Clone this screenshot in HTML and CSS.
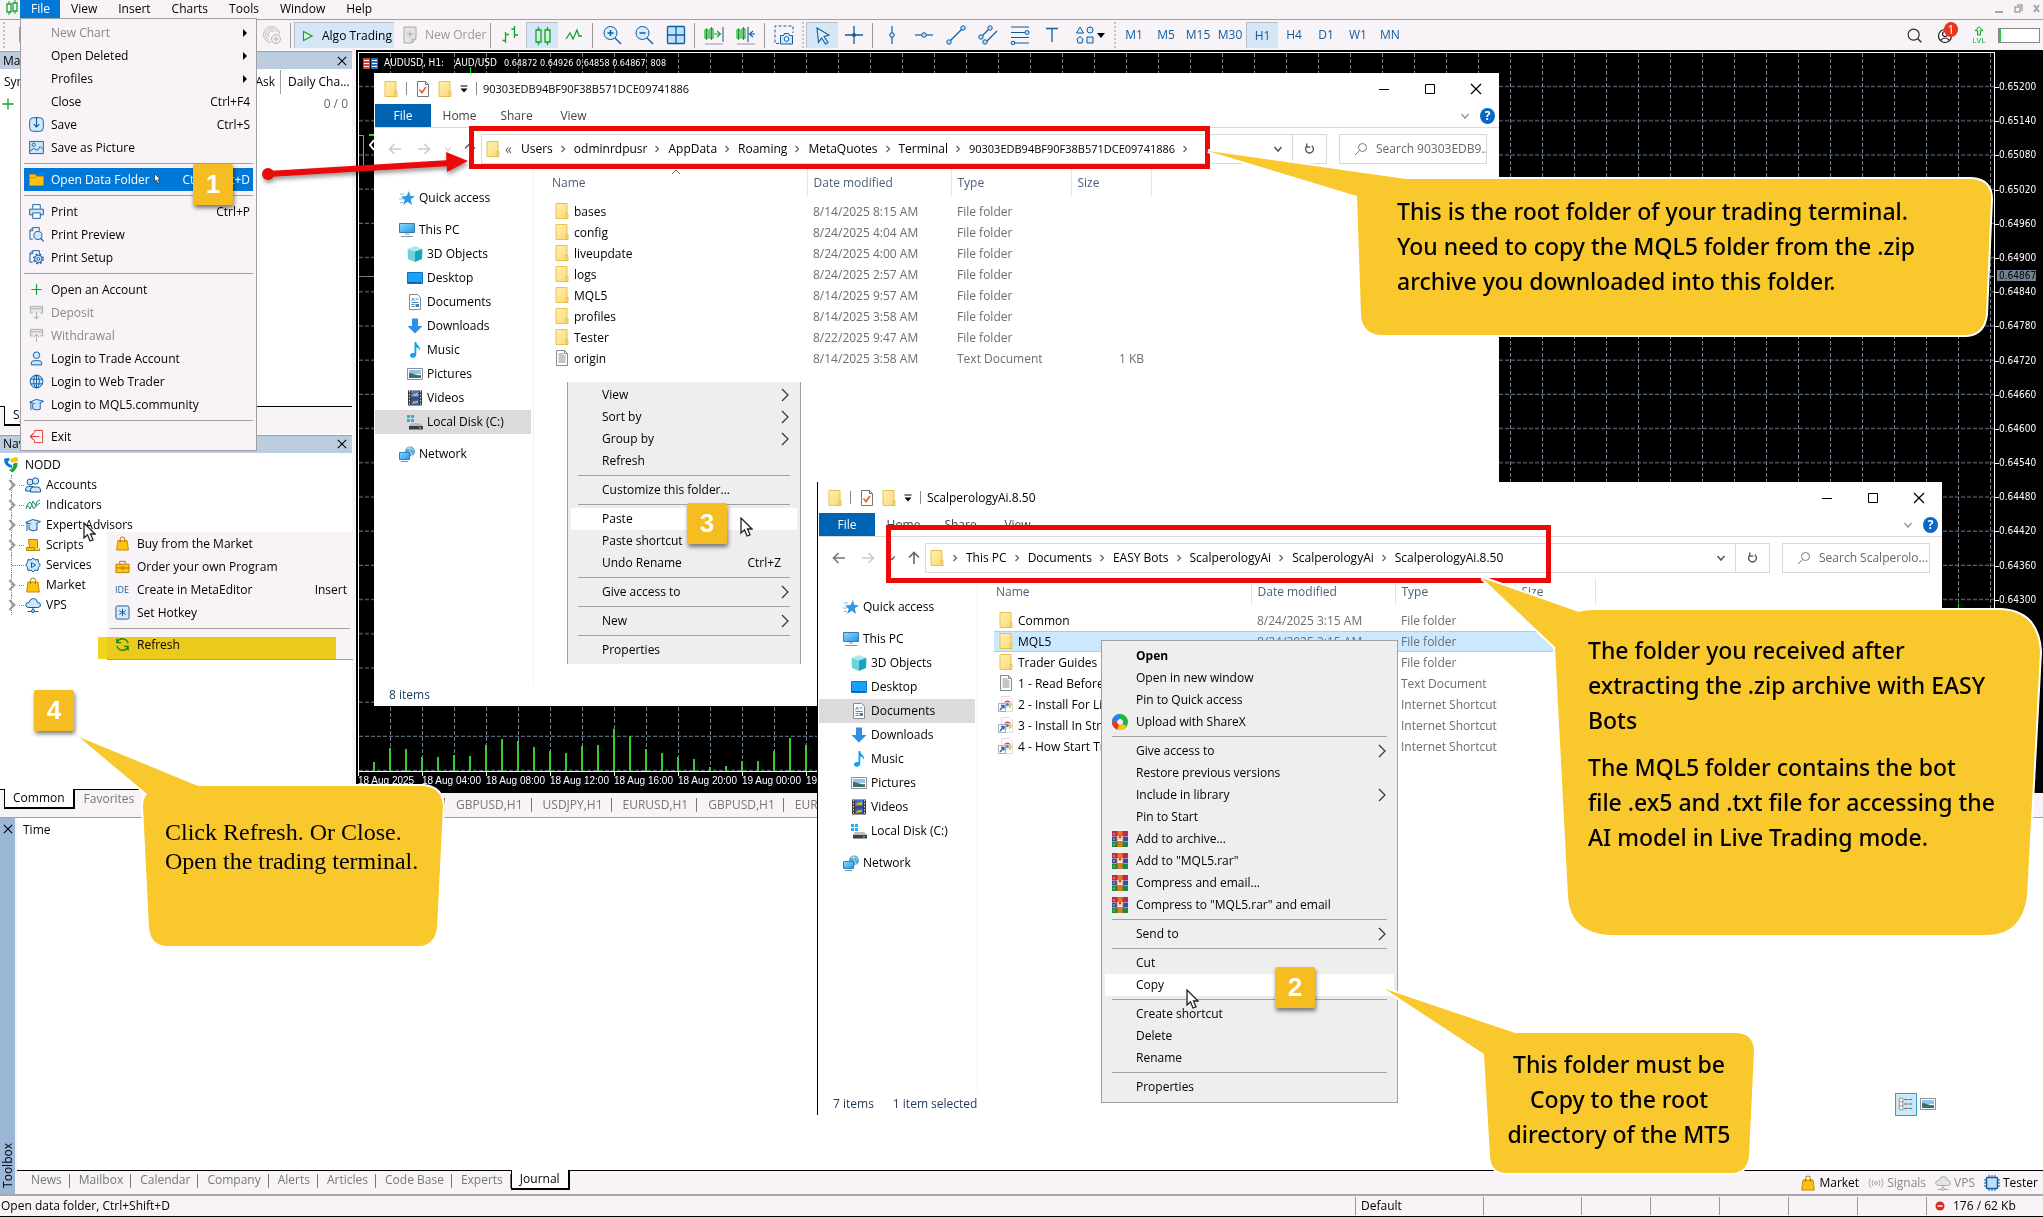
FILE: index.html
```html
<!DOCTYPE html>
<html lang="en">
<head>
<meta charset="utf-8">
<title>Trading terminal - install guide</title>
<link rel="stylesheet" href="styles.css">
</head>
<body>
<svg class="sprite" aria-hidden="true">
  <defs>
    <linearGradient id="g-folder" x1="0" y1="0" x2="1" y2="1"><stop offset="0" stop-color="#fff0ae"/><stop offset="1" stop-color="#fbd978"/></linearGradient>
    <linearGradient id="g-screen" x1="0" y1="0" x2="1" y2="1"><stop offset="0" stop-color="#8fd8ff"/><stop offset="1" stop-color="#1f97e8"/></linearGradient>
    <symbol id="folder" viewBox="0 0 16 16"><path d="M2 .5h11V13l.8 2.5H2z" fill="url(#g-folder)" stroke="#e8c24f"/><path d="M12 10.5h2v5h-2z" fill="#fbe08a" stroke="#e2b640" stroke-width=".8"/></symbol>
    <symbol id="doccheck" viewBox="0 0 16 16"><path d="M2.500.5h8l3 3v12h-11z" fill="#fff" stroke="#777"/><path d="M10.500.5v3h3" fill="none" stroke="#777"/><path d="m4.500 8.500 2.500 3 4-5.500" fill="none" stroke="#e8622a" stroke-width="1.700"/></symbol>
    <symbol id="textdoc" viewBox="0 0 16 16"><path d="M2.500.5h8l3 3v12h-11z" fill="#fff" stroke="#8a8a8a"/><path d="M10.500.5v3h3M4.500 4h5M4.500 6h7M4.500 8h7M4.500 10h7M4.500 12h7" fill="none" stroke="#8a8a8a"/></symbol>
    <symbol id="link" viewBox="0 0 16 16"><path d="M3.500.5h8l3 3v12h-11z" fill="#fff" stroke="#ddd"/><path d="M6 6.500a4 4 0 0 1 7 0z" fill="#e24a35"/><path d="M13 6.500a4 4 0 0 1-2 6V8z" fill="#f5bf2c"/><path d="M6 6.500 9.500 12a4 4 0 0 1-3.500-5.500" fill="#f5bf2c"/><circle cx="9.500" cy="8.500" r="1.900" fill="#3b79e0" stroke="#fff" stroke-width=".7"/><path d="M.5 7.500h7v8h-7z" fill="#fff" stroke="#aab"/><path d="m2 14 3.500-4M3 9.500h3v3" fill="none" stroke="#2a5fa8" stroke-width="1.400"/></symbol>
    <symbol id="star" viewBox="0 0 16 16"><path d="m10 1 1.200 4.800 4.800.7-4.200 2.800L13 15l-4.300-3.200L4 15l1.800-5L2 6.500l5.500-.6z" fill="#2f98e0"/><path d="M1 4h4M0 9h4M1 12.500h3" stroke="#7dbfec"/></symbol>
    <symbol id="pc" viewBox="0 0 16 16"><path d="M.5 1.500h15v9H.5z" fill="url(#g-screen)" stroke="#3d7ba6"/><path d="M6 12h4M2 14.500h12" stroke="#7d98aa" stroke-width="1.200"/></symbol>
    <symbol id="cube" viewBox="0 0 16 16"><path d="M8 0 15.500 3 8 5.500.5 3z" fill="#a9e8ee"/><path d="M.5 3 8 5.500V16L1 13z" fill="#6fd3de"/><path d="M15.500 3 8 5.500V16l7-3z" fill="#17a5bd"/></symbol>
    <symbol id="desktop" viewBox="0 0 16 16"><path d="M.5 2.500h15v11H.5z" fill="#18a0fb" stroke="#0d73c4"/><path d="M1 12.500h13" stroke="#095a9c" stroke-dasharray="9 1"/></symbol>
    <symbol id="docs" viewBox="0 0 16 16"><path d="M2.500.5h8l3 3v12h-11z" fill="#fff" stroke="#8a8a8a"/><path d="m4.500 7 1.500-3 1.500 3M8.500 5h3M4.500 8.500h7M4.500 10.500h3M4.500 12.500h3" fill="none" stroke="#4a90c8"/><path d="M8.500 10h3.500v3H8.500z" fill="#4a7fa8"/></symbol>
    <symbol id="down" viewBox="0 0 16 16"><path d="M5 .5h6v7.500h4.500L8 15.500.5 8H5z" fill="#2f8fe6"/></symbol>
    <symbol id="music" viewBox="0 0 16 16"><path d="M7.500 0h1.800c0 3.500 4.700 4 3.700 9-1-2.800-2.300-3.300-3.700-3.500V12c0 5-6.300 4.500-6.300 1.500 0-2 2.500-3 4.500-2.200z" fill="#12a0f4"/></symbol>
    <symbol id="pics" viewBox="0 0 16 16"><path d="M.5 2.500h15v11H.5z" fill="#fff" stroke="#8f8f8f"/><path d="M2 4h12v4H2z" fill="#8fc4f0"/><path d="M2 7c4 0 7 3 12 2v3H2z" fill="#3c6e72"/></symbol>
    <symbol id="video" viewBox="0 0 16 16"><path d="M1 .5h14v15H1z" fill="#3a3a3a"/><path d="M4 1h8v6.500H4z" fill="#3e6fd0"/><path d="M4 8.500h8V15H4z" fill="#2f56b4"/><path d="M5 6c2-4 4-1 6-4v4zM5 14c1-5 4-1 6-4v3z" fill="#e0b02c"/><path d="M2.500 1v14M13.500 1v14" stroke="#ddd" stroke-dasharray="1.500 1.500"/></symbol>
    <symbol id="disk" viewBox="0 0 16 16"><path d="M0 1h3v3H0zM4 1h3v3H4zM0 5h3v3H0zM4 5h3v3H4z" fill="#18b4f0"/><path d="M4 9h9l3 3H2z" fill="#b9bcc0"/><path d="M2 12h14v3.500H2z" fill="#3c3f42"/><path d="M12 13h2v1.500h-2z" fill="#35d048"/></symbol>
    <symbol id="net" viewBox="0 0 16 16"><circle cx="11" cy="5.500" r="5" fill="#5aa7cf"/><path d="M8 3c3-3 6 2 7 1M11 1c-2 4 2 5 2 9" fill="none" stroke="#cfe8f4"/><path d="M.5 6.500h10v7H.5z" fill="url(#g-screen)" stroke="#2c83b8"/><path d="M2 15.500h7" stroke="#6b94ad"/></symbol>
    <symbol id="sharex" viewBox="0 0 16 16"><circle cx="8" cy="8" r="5.500" fill="none" stroke="#22b24c" stroke-width="5"/><path d="M8 2.500A5.500 5.500 0 0 0 2.500 8" fill="none" stroke="#2f7df0" stroke-width="5"/><path d="M2.500 8A5.500 5.500 0 0 0 7 13.500" fill="none" stroke="#ee3124" stroke-width="5"/><path d="M6 13.500A5.500 5.500 0 0 0 12.500 11" fill="none" stroke="#ffc20e" stroke-width="5"/><circle cx="8" cy="8" r="2" fill="#eee"/></symbol>
    <symbol id="rar" viewBox="0 0 16 16"><path d="M0 0h16v5H0z" fill="#c8234f"/><path d="M0 5.500h16v5H0z" fill="#3b46a8"/><path d="M0 11h16v5H0z" fill="#1c8a40"/><path d="M5.500 0h5v16h-5z" fill="#e8741c"/><path d="M4.500 5h7v6h-7z" fill="#c9480f"/><path d="M6 5v4.500h4V5M8 7v3" stroke="#fff" fill="none" stroke-width="1.300"/><path d="M2 2v2M2 7v2M2 12.500v2" stroke="#f2d24a"/></symbol>
    <symbol id="pointer" viewBox="0 0 13 20"><path d="M1 1v15l3.500-3.200L7 19l3-1.200L7.500 12H12z" fill="#fff" stroke="#222" stroke-width="1.300"/></symbol>
    <symbol id="chev" viewBox="0 0 10 14"><path d="m2 1 6 6-6 6" fill="none" stroke="#333" stroke-width="1.200"/></symbol>
    <symbol id="tri" viewBox="0 0 6 10"><path d="M1 1v8l4-4z"/></symbol>
    <symbol id="crumb" viewBox="0 0 6 8"><path d="m1.500 1 3 3-3 3" fill="none" stroke="#666" stroke-width="1.300"/></symbol>
    <symbol id="chevdown" viewBox="0 0 10 8"><path d="m1.500 2 3.500 4 3.500-4" fill="none" stroke="currentColor" stroke-width="1.500"/></symbol>
    <symbol id="qmenu" viewBox="0 0 8 8"><path d="M.5 1h7" stroke="#000"/><path d="M.5 3.500h7L4 7.500z"/></symbol>
    <symbol id="back" viewBox="0 0 14 12"><path d="M13 6H1.500M6.500 1l-5 5 5 5" fill="none" stroke="currentColor" stroke-width="1.600"/></symbol>
    <symbol id="min" viewBox="0 0 12 12"><path d="M1 6.500h10" stroke="#000"/></symbol>
    <symbol id="max" viewBox="0 0 12 12"><path d="M1.500 1.500h9v9h-9z" fill="none" stroke="#000"/></symbol>
    <symbol id="x" viewBox="0 0 12 12"><path d="m1 1 10 10M11 1 1 11" stroke="currentColor" stroke-width="1.300"/></symbol>
    <symbol id="reload" viewBox="0 0 12 12"><path d="M8.500 2.500A4.300 4.300 0 1 1 3.500 2.500" fill="none" stroke="#555" stroke-width="1.500"/><path d="M3 0v4h4" fill="none" stroke="#555" stroke-width="1.500"/></symbol>
    <symbol id="lens" viewBox="0 0 14 14"><circle cx="8.500" cy="5.500" r="4" fill="none" stroke="currentColor"/><path d="M5.500 8.500 1 13" stroke="currentColor"/></symbol>
    <symbol id="plus" viewBox="0 0 16 16"><path d="M8 2.500v11M2.500 8h11" stroke="#12a32a" stroke-width="1.300"/></symbol>
    <symbol id="save" viewBox="0 0 16 16"><rect x=".7" y=".7" width="14.600" height="14.600" rx="4" fill="#d3e9fb" stroke="#0f5c9e"/><path d="M8 0v10M5 7.500l3 3 3-3" fill="none" stroke="#0f5c9e" stroke-width="1.200"/></symbol>
    <symbol id="savepic" viewBox="0 0 16 16"><path d="M.7 1.500h14.600v13H.7z" fill="#cfe7fc" stroke="#0f5c9e"/><circle cx="5" cy="5" r="1.700" fill="none" stroke="#0f5c9e"/><path d="m1 12 4-3 4 2 3-4 3 3" fill="none" stroke="#0f5c9e"/></symbol>
    <symbol id="openfolder" viewBox="0 0 16 16"><path d="M.5 2.500h6l1.500 2h7.500v10H.5z" fill="#ffc20e" stroke="#c98a00"/><path d="M.5 6h6L8 4.500" fill="none" stroke="#c98a00"/></symbol>
    <symbol id="print" viewBox="0 0 16 16"><path d="M4 5V.7h8V5" fill="#fff" stroke="#0f5c9e"/><path d="M.7 5.500h14.600v6H.7z" fill="#cfe7fc" stroke="#0f5c9e"/><path d="M4 9.500h8v5.800H4z" fill="#fff" stroke="#0f5c9e"/></symbol>
    <symbol id="preview" viewBox="0 0 16 16"><path d="M4 13H1V3.500L4 .7h7V4M1 4h3V1" fill="none" stroke="#0f5c9e"/><circle cx="9.500" cy="9" r="4.300" fill="#cfe7fc" stroke="#0f5c9e"/><path d="m12.500 12 3 3.300" stroke="#0f5c9e" stroke-width="1.300"/></symbol>
    <symbol id="setup" viewBox="0 0 16 16"><path d="M4 13H1V3.500L4 .7h7V4M1 4h3V1" fill="none" stroke="#0f5c9e"/><circle cx="10" cy="9.500" r="4" fill="#cfe7fc" stroke="#0f5c9e"/><circle cx="10" cy="9.500" r="5" fill="none" stroke="#0f5c9e" stroke-width="1.500" stroke-dasharray="2 2"/><circle cx="10" cy="9.500" r="1.500" fill="#fff" stroke="#0f5c9e"/></symbol>
    <symbol id="deposit" viewBox="0 0 16 16"><path d="M4 8.500H1.500v-7h13v7H12M1.500 4h13" fill="#e8e8e8" stroke="#aaa"/><path d="M8 7v8M5 12l3 3 3-3" fill="none" stroke="#aaa"/></symbol>
    <symbol id="withdraw" viewBox="0 0 16 16"><path d="M4 8.500H1.500v-7h13v7H12M1.500 4h13" fill="#e8e8e8" stroke="#aaa"/><path d="M8 15V7M5 10l3-3 3 3" fill="none" stroke="#aaa"/></symbol>
    <symbol id="user" viewBox="0 0 16 16"><circle cx="8" cy="4.500" r="3.500" fill="#cfe7fc" stroke="#0f5c9e"/><path d="M2.500 14.800v-2q0-2.500 3-2.500h5q3 0 3 2.500v2z" fill="#cfe7fc" stroke="#0f5c9e"/></symbol>
    <symbol id="users" viewBox="0 0 16 16"><circle cx="5" cy="5" r="3" fill="#cfe7fc" stroke="#0f5c9e"/><path d="M.7 14v-2q0-2.500 3-2.500H8V14z" fill="#cfe7fc" stroke="#0f5c9e"/><circle cx="10.500" cy="4" r="3.200" fill="#cfe7fc" stroke="#0f5c9e"/><path d="M5.500 15v-2q0-3 3-3h4q3 0 3 3v2z" fill="#cfe7fc" stroke="#0f5c9e"/></symbol>
    <symbol id="globe" viewBox="0 0 16 16"><circle cx="8" cy="8" r="6.800" fill="#cfe7fc" stroke="#0f5c9e"/><ellipse cx="8" cy="8" rx="3" ry="6.800" fill="none" stroke="#0f5c9e"/><path d="M8 1v14M1.500 5.500h13M1.500 10.500h13" stroke="#0f5c9e"/></symbol>
    <symbol id="cap" viewBox="0 0 16 16"><path d="m.7 5.500 7-3 7.800 2-7 3.500z" fill="#cfe7fc" stroke="#0f5c9e"/><path d="M4 7.500v5q4 2.500 8 .5V6.500" fill="#cfe7fc" stroke="#0f5c9e"/><path d="M2 6v8" stroke="#0f5c9e"/></symbol>
    <symbol id="exit" viewBox="0 0 16 16"><path d="M6 4V1.500h8.500v13H6V12" fill="none" stroke="#e03a30"/><path d="M11 8H1.500M5 4.500 1.500 8 5 11.500" fill="none" stroke="#e03a30" stroke-width="1.200"/></symbol>
    <symbol id="bag" viewBox="0 0 16 16"><path d="M3 5h10l1.300 10H1.700z" fill="#ffc20e" stroke="#c98a00"/><path d="M5.500 7V3.500q0-2.500 2.500-2.500t2.500 2.500V7" fill="none" stroke="#a87400"/></symbol>
    <symbol id="case" viewBox="0 0 16 16"><path d="M1 5.500h14v9H1z" fill="#ffc20e" stroke="#b98200"/><path d="M5 5V2.500h6V5M1 9.500h5M10 9.500h5M6.500 8.500h3v2h-3z" fill="none" stroke="#a87400"/></symbol>
    <symbol id="hotkey" viewBox="0 0 16 16"><rect x="1" y="1" width="14" height="14" rx="1.500" fill="#d3e9fb" stroke="#0f5c9e"/><path d="M8 4v8M4.500 6l7 4M11.500 6l-7 4" stroke="#0f5c9e"/></symbol>
    <symbol id="refresh" viewBox="0 0 16 16"><path d="M14 6.500A6.300 6.300 0 0 0 2.500 5M2 9.500A6.300 6.300 0 0 0 13.500 11M2 1.500V6h4.500M14 14.500V10H9.500" fill="none" stroke="#1f9a1f" stroke-width="1.400"/></symbol>
    <symbol id="indic" viewBox="0 0 16 16"><path d="M1 12q3-9 5-6t2 5q3 1 3-4 0-3 4-4" fill="none" stroke="#1c6fb0"/><path d="M1 9q3-1 4 3l3-8 3 5 4-3" fill="none" stroke="#12a32a"/></symbol>
    <symbol id="script" viewBox="0 0 16 16"><path d="M3.500 2.500h9v11h-11v-3h3z" fill="#ffc20e" stroke="#b98200"/><path d="M1.500 10.500h8v3h5v-2" fill="#ffd95c" stroke="#b98200"/></symbol>
    <symbol id="service" viewBox="0 0 16 16"><path d="m8 1 2 2 3-.5.500 3L15.300 8l-1.800 2.500-.5 3-3-.5-2 2-2-2-3 .5-.5-3L.7 8l1.800-2.500.5-3 3 .5z" fill="#cfe7fc" stroke="#0f5c9e"/><path d="M6.500 5.500v5l4-2.500z" fill="none" stroke="#0f5c9e"/></symbol>
    <symbol id="cloud" viewBox="0 0 16 16"><path d="M4 10.500Q.7 10.500.7 8T4 5.500Q5 1.500 8.500 1.500T12.500 5.500q3 0 3 2.500t-3 2.500z" fill="var(--cf,#cfe7fc)" stroke="var(--cs,#0f5c9e)"/><path d="M8 10.500V14M2.500 14.500h11" stroke="var(--cs,#0f5c9e)"/><circle cx="8" cy="14" r="1.500" fill="var(--cf,#cfe7fc)" stroke="var(--cs,#0f5c9e)"/></symbol>
    <symbol id="nodd" viewBox="0 0 16 16"><path d="M1 2q4-2 6 0L5 5q0 2 4 3v3Q1 10 1 2" fill="#0a7de0"/><path d="M7 3q4-4 8-2v4q-2-1-4 0T8 5z" fill="#ffc400"/><path d="M10 7q3-2 4.500-1Q15 12 9 15.500L6 13q5-2 4-6" fill="#19a83a"/></symbol>
    <symbol id="signals" viewBox="0 0 16 16"><circle cx="8" cy="8" r="1.500" fill="none" stroke="#aaa"/><path d="M5 5q-2 3 0 6M11 5q2 3 0 6M2.500 3.500q-3 4.500 0 9M13.500 3.500q3 4.500 0 9" fill="none" stroke="#aaa"/></symbol>
    <symbol id="chip" viewBox="0 0 16 16"><rect x="2.500" y="2.500" width="11" height="11" rx="1" fill="#bfe0fb" stroke="#0f5c9e" stroke-width="1.500"/><path d="M5 0v2M8 0v2M11 0v2M5 14v2M8 14v2M11 14v2M0 5h2M0 8h2M0 11h2M14 5h2M14 8h2M14 11h2" stroke="#0f5c9e"/></symbol>
    <symbol id="t-chart" viewBox="0 0 20 20"><path d="M2.500 2v15H18" fill="none" stroke="#999"/><path d="m4 9 4-4 4 6 5-4" fill="none" stroke="#0f5c9e"/></symbol>
    <symbol id="t-radar" viewBox="0 0 20 20"><g fill="none" stroke="#b8b8b8"><path d="M9 17.500A8 8 0 1 1 17.500 9M7 15a6 6 0 1 1 8-8M7 12a3.500 3.500 0 1 1 5-5"/><circle cx="14" cy="14" r="4.500" fill="#eee"/><path d="M14 11.500v5M11.500 14h5"/></g></symbol>
    <symbol id="t-play" viewBox="0 0 12 14"><path d="M1.500 2.500v9l8.500-4.500z" fill="#e2f6e4" stroke="#12a32a" stroke-width="1.200"/></symbol>
    <symbol id="t-order" viewBox="0 0 14 18"><path d="M1 1h12v12l-4 4H1z" fill="#e4e4e4" stroke="#aaa"/><path d="M13 13H9v4M7 5v6M4 8h6" stroke="#aaa" fill="none"/></symbol>
    <symbol id="t-bars" viewBox="0 0 20 20"><path d="M5.500 7v11M2.500 15.500h3M5.500 9.500H9M14.500 1v12M11.500 4h3M14.500 10H18" fill="none" stroke="#12a32a" stroke-width="1.300"/></symbol>
    <symbol id="t-candles" viewBox="0 0 20 20"><path d="M5.500 1v3M5.500 16v3M14.500 1v3M14.500 16v3" stroke="#12a32a" stroke-width="1.300"/><path d="M3 4h5v12H3zM12 4h5v12h-5z" fill="#d6f2da" stroke="#12a32a" stroke-width="1.300"/></symbol>
    <symbol id="t-wave" viewBox="0 0 20 20"><path d="m2 14 4-6 3 6 4-9 2 6h3" fill="none" stroke="#12a32a" stroke-width="1.300"/></symbol>
    <symbol id="t-zin" viewBox="0 0 20 20"><circle cx="8.500" cy="8" r="6.500" fill="#d9ecfb" stroke="#0f5c9e"/><path d="M8.500 5v6M5.500 8h6M13 13l6 6" stroke="#0f5c9e" stroke-width="1.400"/></symbol>
    <symbol id="t-zout" viewBox="0 0 20 20"><circle cx="8.500" cy="8" r="6.500" fill="#d9ecfb" stroke="#0f5c9e"/><path d="M5.500 8h6M13 13l6 6" stroke="#0f5c9e" stroke-width="1.400"/></symbol>
    <symbol id="t-grid" viewBox="0 0 20 20"><rect x="1.500" y="1.500" width="17" height="17" rx="1" fill="#bfe0fb" stroke="#0f5c9e" stroke-width="1.300"/><path d="M10 2v16M2 10h16" stroke="#0f5c9e" stroke-width="1.300"/></symbol>
    <symbol id="t-scroll" viewBox="0 0 20 20"><path d="M1 5h3v8H1zM6 4h3v9H6zM2.500 3v12M7.500 2v13M10 9h6M13 6l3.500 3-3.500 3" fill="none" stroke="#12a32a" stroke-width="1.100"/><path d="M19 2v15" stroke="#0f5c9e"/><path d="M1 19h18" stroke="#999"/></symbol>
    <symbol id="t-shift" viewBox="0 0 20 20"><path d="M1 5h3v8H1zM6 4h3v9H6zM2.500 3v12M7.500 2v13" fill="none" stroke="#12a32a" stroke-width="1.100"/><path d="M12 2v15M19 9h-5M17 6l-3.500 3 3.500 3" fill="none" stroke="#0f5c9e" stroke-width="1.100"/><path d="M1 19h18" stroke="#999"/></symbol>
    <symbol id="t-camera" viewBox="0 0 20 20"><path d="M5 18.500H1V1h18v7" fill="none" stroke="#0f5c9e" stroke-dasharray="3 2"/><path d="M6.500 10.500h3l1-2h4l1 2h3v8.500h-12z" fill="#cfe7fc" stroke="#0f5c9e"/><circle cx="12.500" cy="14" r="2.300" fill="#fff" stroke="#0f5c9e"/></symbol>
    <symbol id="t-cursor" viewBox="0 0 20 20"><path d="m4 2 12 7-5 1.500 4 6-2.500 1.500-4-6-3 4.500z" fill="#d9ecfb" stroke="#0f5c9e" stroke-width="1.100"/></symbol>
    <symbol id="t-cross" viewBox="0 0 20 20"><path d="M10 1v18M1 10h18" stroke="#0f5c9e" stroke-width="1.300"/><circle cx="10" cy="10" r="2" fill="#0f5c9e"/></symbol>
    <symbol id="t-vline" viewBox="0 0 20 20"><path d="M10 1v18" stroke="#0f5c9e" stroke-width="1.200"/><circle cx="10" cy="10" r="2.300" fill="#bfe0fb" stroke="#0f5c9e"/></symbol>
    <symbol id="t-hline" viewBox="0 0 20 20"><path d="M1 10h18" stroke="#0f5c9e" stroke-width="1.200"/><circle cx="10" cy="10" r="2.300" fill="#bfe0fb" stroke="#0f5c9e"/></symbol>
    <symbol id="t-trend" viewBox="0 0 20 20"><path d="M3 17 17 3" stroke="#0f5c9e" stroke-width="1.200"/><circle cx="3" cy="17" r="2.200" fill="#bfe0fb" stroke="#0f5c9e"/><circle cx="17" cy="3" r="2.200" fill="#bfe0fb" stroke="#0f5c9e"/></symbol>
    <symbol id="t-channel" viewBox="0 0 20 20"><path d="M3 12 12 3M8 17 19 6" stroke="#0f5c9e" stroke-width="1.200"/><circle cx="3" cy="12" r="2.200" fill="#bfe0fb" stroke="#0f5c9e"/><circle cx="12" cy="3" r="2.200" fill="#bfe0fb" stroke="#0f5c9e"/><circle cx="7" cy="17" r="2.200" fill="#bfe0fb" stroke="#0f5c9e"/></symbol>
    <symbol id="t-fibo" viewBox="0 0 20 20"><path d="M1 2h18M1 7.500h18M1 12.500h18M1 18h18" stroke="#0f5c9e" stroke-width="1.200"/><circle cx="17" cy="7.500" r="2" fill="#bfe0fb" stroke="#0f5c9e"/><circle cx="3" cy="18" r="1.800" fill="#bfe0fb" stroke="#0f5c9e"/></symbol>
    <symbol id="t-text" viewBox="0 0 20 20"><path d="M4 3.500h12M10 3.500V17" stroke="#0f5c9e" stroke-width="1.300"/></symbol>
    <symbol id="t-shapes" viewBox="0 0 20 20"><g fill="#d9ecfb" stroke="#0f5c9e"><path d="m5 2 3.500 6h-7zM12 12h6v6h-6zM5 11.500 8 14l-1 4H3l-1-4z"/><circle cx="15" cy="5" r="3"/></g></symbol>
    <symbol id="t-search" viewBox="0 0 20 20"><circle cx="9" cy="9" r="6.500" fill="none" stroke="#222" stroke-width="1.300"/><path d="m13.500 13.500 4.500 4.500" stroke="#222" stroke-width="1.500"/></symbol>
    <symbol id="t-user" viewBox="0 0 20 20"><circle cx="9" cy="11" r="6.500" fill="none" stroke="#222" stroke-width="1.200"/><circle cx="9" cy="9" r="2.500" fill="none" stroke="#222" stroke-width="1.200"/><path d="M4.500 15.500q4.500-5 9 0" fill="none" stroke="#222" stroke-width="1.200"/></symbol>
    <symbol id="t-lvl" viewBox="0 0 12 10"><path d="m6 .7 4 4H7.500V9h-3V4.700H2z" fill="#d6f2da" stroke="#12a32a"/></symbol>
    <symbol id="appicon" viewBox="0 0 12 16"><path d="M3 1v14M9 0v14" stroke="#12a32a"/><path d="M1 4h4v8H1zM7 3h4v8H7z" fill="#fff" stroke="#12a32a" stroke-width="1.300"/></symbol>
  </defs>
</svg>

<div class="app">
  <nav class="menubar">
    <svg class="appicon"><use href="#appicon"/></svg>
    <button class="mb active">File</button><button class="mb">View</button><button class="mb">Insert</button><button class="mb">Charts</button><button class="mb">Tools</button><button class="mb">Window</button><button class="mb">Help</button>
    <span class="wctl"><svg viewBox="0 0 46 10"><path d="M0 8h8" stroke="#a5a5a5" stroke-width="2"/><path d="M20 3h5v5h-5zM22 1h5v6" fill="none" stroke="#a5a5a5" stroke-width="1.500"/><path d="m39 1 5 7M44 1l-5 7" stroke="#a5a5a5" stroke-width="2"/></svg></span>
  </nav>

  <div class="toolbar">
    <span class="grip"></span>
    <div class="tools first">
      <button class="tb" aria-label="New chart"><svg><use href="#t-chart"/></svg></button>
      <button class="tb push" aria-label="Signals"><svg><use href="#t-radar"/></svg></button>
    </div>
    <span class="sep"></span>
    <button class="wide on"><svg class="i-play"><use href="#t-play"/></svg>Algo Trading</button>
    <button class="wide off"><svg class="i-order"><use href="#t-order"/></svg>New Order</button>
    <span class="sep"></span>
    <button class="tb" aria-label="Bars"><svg><use href="#t-bars"/></svg></button><button class="tb on" aria-label="Candles"><svg><use href="#t-candles"/></svg></button><button class="tb" aria-label="Line"><svg><use href="#t-wave"/></svg></button>
    <span class="sep"></span>
    <button class="tb" aria-label="Zoom in"><svg><use href="#t-zin"/></svg></button><button class="tb" aria-label="Zoom out"><svg><use href="#t-zout"/></svg></button><button class="tb" aria-label="Tile"><svg><use href="#t-grid"/></svg></button>
    <span class="sep"></span>
    <button class="tb" aria-label="Auto scroll"><svg><use href="#t-scroll"/></svg></button><button class="tb" aria-label="Shift"><svg><use href="#t-shift"/></svg></button>
    <span class="sep"></span>
    <button class="tb" aria-label="Screenshot"><svg><use href="#t-camera"/></svg></button>
    <span class="grip"></span>
    <button class="tb on" aria-label="Cursor"><svg><use href="#t-cursor"/></svg></button><button class="tb" aria-label="Crosshair"><svg><use href="#t-cross"/></svg></button>
    <span class="sep"></span>
    <button class="tb" aria-label="Vertical line"><svg><use href="#t-vline"/></svg></button><button class="tb" aria-label="Horizontal line"><svg><use href="#t-hline"/></svg></button><button class="tb" aria-label="Trend line"><svg><use href="#t-trend"/></svg></button><button class="tb" aria-label="Channel"><svg><use href="#t-channel"/></svg></button><button class="tb" aria-label="Fibonacci"><svg><use href="#t-fibo"/></svg></button><button class="tb" aria-label="Text"><svg><use href="#t-text"/></svg></button><button class="tb shapes" aria-label="Shapes"><svg><use href="#t-shapes"/></svg><svg class="dd" viewBox="0 0 8 5"><path d="M0 0h8L4 5z"/></svg></button>
    <span class="grip"></span>
    <button class="tf">M1</button><button class="tf">M5</button><button class="tf">M15</button><button class="tf">M30</button><button class="tf on">H1</button><button class="tf">H4</button><button class="tf">D1</button><button class="tf">W1</button><button class="tf">MN</button>
    <div class="tright">
      <button class="tb" aria-label="Search"><svg class="s18"><use href="#t-search"/></svg></button>
      <button class="tb note" aria-label="Profile"><svg><use href="#t-user"/></svg><b>1</b></button>
      <span class="lvl"><svg><use href="#t-lvl"/></svg>LVL</span>
      <span class="battery"></span>
    </div>
  </div>

  <div class="workspace">
    <aside class="left">
      <section class="pane">
        <header class="phead"><span>Market Watch</span><svg class="x"><use href="#x"/></svg></header>
        <div class="mwhead"><span>Symbol</span><span class="ask">Ask</span><span class="daily">Daily Cha...</span></div>
        <div class="mwrow"><svg class="s16"><use href="#plus"/></svg><span>0 / 0</span></div>
        <footer class="ptabs"><button class="ptab cur">Symbols</button></footer>
      </section>
      <section class="pane">
        <header class="phead"><span>Navigator</span><svg class="x"><use href="#x"/></svg></header>
        <ul class="tree">
          <li class="root"><svg class="s16"><use href="#nodd"/></svg>NODD</li>
          <li><i></i><svg class="s16"><use href="#users"/></svg>Accounts</li>
          <li><i></i><svg class="s16"><use href="#indic"/></svg>Indicators</li>
          <li><i></i><svg class="s16"><use href="#cap"/></svg>Expert Advisors</li>
          <li><i></i><svg class="s16"><use href="#script"/></svg>Scripts</li>
          <li><i class="leaf"></i><svg class="s16"><use href="#service"/></svg>Services</li>
          <li><i></i><svg class="s16"><use href="#bag"/></svg>Market</li>
          <li><i></i><svg class="s16"><use href="#cloud"/></svg>VPS</li>
        </ul>
        <footer class="ptabs"><button class="ptab cur">Common</button><button class="ptab">Favorites</button></footer>
      </section>
    </aside>

    <main class="chartcol">
      <div class="chart">
        <div class="plot">
          <svg class="grid">
            <defs>
              <pattern id="pv" width="32" height="6" patternUnits="userSpaceOnUse"><path d="M31.500 0v4" stroke="#708090"/></pattern>
              <pattern id="ph" width="6" height="34.200" patternUnits="userSpaceOnUse"><path d="M0 33.500h4" stroke="#708090"/></pattern>
            </defs>
            <rect width="100%" height="100%" fill="url(#pv)"/><rect width="100%" height="100%" fill="url(#ph)"/>
            <path d="M0 223.500h1635" stroke="#708090"/>
            <path d="M0 82.500h4.500V112M111.500 14v6M1599.500 551v4" fill="none" stroke="#0f0"/><path d="M10 82h6" stroke="#0f0" stroke-width="2"/><path d="m15 87-4 5 4 5" fill="none" stroke="#fff" stroke-width="2"/>
          </svg>
          <div class="ctitle"><svg viewBox="0 0 15 11"><path d="M0 0h7v11H0z" fill="#e03a30"/><path d="M8 0h7v11H8z" fill="#1c6fd0"/><path d="M1 2.500h5M1 5.500h5M1 8.500h5M9 2.500h5M9 5.500h5M9 8.500h5" stroke="#fff"/></svg><span class="sym">AUDUSD, H1:</span><span class="pair">AUD/USD</span><span class="ohlc">0.64872 0.64926 0.64858 0.64867</span><span class="ohlc">808</span></div>
          <div class="volume"><i style="height:9px"></i><i style="height:23px"></i><i style="height:22px"></i><i style="height:14px"></i><i style="height:14px"></i><i style="height:16px"></i><i style="height:15px"></i><i style="height:26px"></i><i style="height:32px"></i><i style="height:30px"></i><i style="height:24px"></i><i style="height:20px"></i><i style="height:18px"></i><i style="height:25px"></i><i style="height:26px"></i><i style="height:42px"></i><i style="height:35px"></i><i style="height:22px"></i><i style="height:18px"></i><i style="height:14px"></i><i style="height:12px"></i><i style="height:4px"></i><i style="height:5px"></i><i style="height:10px"></i><i style="height:10px"></i><i style="height:20px"></i><i style="height:33px"></i><i style="height:26px"></i></div>
        </div>
        <div class="prices"><span>0.65200</span><span>0.65140</span><span>0.65080</span><span>0.65020</span><span>0.64960</span><span>0.64900</span><span>0.64840</span><span>0.64780</span><span>0.64720</span><span>0.64660</span><span>0.64600</span><span>0.64540</span><span>0.64480</span><span>0.64420</span><span>0.64360</span><span>0.64300</span><b>0.64867</b></div>
        <div class="times"><span>18 Aug 2025</span><span>18 Aug 04:00</span><span>18 Aug 08:00</span><span>18 Aug 12:00</span><span>18 Aug 16:00</span><span>18 Aug 20:00</span><span>19 Aug 00:00</span><span>19 Aug 04:00</span></div>
      </div>
      <div class="ctabs"><button>GBPUSD,H1</button><button>USDJPY,H1</button><button>EURUSD,H1</button><button>GBPUSD,H1</button><button>EURUSD,H1</button></div>
    </main>
  </div>

  <section class="toolbox">
    <div class="strip"><svg class="x"><use href="#x"/></svg><span>Toolbox</span></div>
    <div class="tbody">
      <div class="journal">Time</div>
      <footer class="ttabs">
        <button>News</button><button>Mailbox</button><button>Calendar</button><button>Company</button><button>Alerts</button><button>Articles</button><button>Code Base</button><button>Experts</button><button class="cur">Journal</button>
        <div class="services"><a href="#"><svg class="s16"><use href="#bag"/></svg>Market</a><a href="#" class="dim"><svg class="s16"><use href="#signals"/></svg>Signals</a><a href="#" class="dim"><svg class="s16"><use href="#cloud"/></svg>VPS</a><a href="#"><svg class="s16"><use href="#chip"/></svg>Tester</a></div>
      </footer>
    </div>
  </section>

  <footer class="status"><span class="msg">Open data folder, Ctrl+Shift+D</span><span class="c1">Default</span><span class="c2"></span><span class="c3"></span><span class="c3"></span><span class="c3"></span><span class="c3"></span><span class="c3"></span><span class="net"><svg viewBox="0 0 10 10"><circle cx="5" cy="5" r="4.500" fill="#dc2a22"/><path d="M2.500 5h5" stroke="#fff" stroke-width="1.500"/></svg>176 / 62 Kb</span></footer>

  <!-- terminal data folder -->
  <section class="win win1">
    <header class="wtitle"><svg class="s16"><use href="#folder"/></svg><i class="bar"></i><svg class="s16"><use href="#doccheck"/></svg><svg class="s16"><use href="#folder"/></svg><svg class="q"><use href="#qmenu"/></svg><i class="bar"></i><span class="hash">90303EDB94BF90F38B571DCE09741886</span>
      <div class="wbtns"><button aria-label="Minimize"><svg><use href="#min"/></svg></button><button aria-label="Maximize"><svg><use href="#max"/></svg></button><button aria-label="Close"><svg><use href="#x"/></svg></button></div></header>
    <div class="ribbon"><button class="file">File</button><button>Home</button><button>Share</button><button>View</button><span class="help"><svg class="cd"><use href="#chevdown"/></svg><b>?</b></span></div>
    <div class="addr">
      <div class="navs"><svg class="ar dis"><use href="#back"/></svg><svg class="ar dis flip"><use href="#back"/></svg><svg class="cd dis"><use href="#chevdown"/></svg><svg class="ar up"><use href="#back"/></svg></div>
      <div class="path"><svg class="s16"><use href="#folder"/></svg><span class="lead">«</span><a href="#">Users</a><svg><use href="#crumb"/></svg><a href="#">odminrdpusr</a><svg><use href="#crumb"/></svg><a href="#">AppData</a><svg><use href="#crumb"/></svg><a href="#">Roaming</a><svg><use href="#crumb"/></svg><a href="#">MetaQuotes</a><svg><use href="#crumb"/></svg><a href="#">Terminal</a><svg><use href="#crumb"/></svg><a href="#" class="hash">90303EDB94BF90F38B571DCE09741886</a><svg><use href="#crumb"/></svg><span class="pend"><svg class="cd"><use href="#chevdown"/></svg><svg class="rl"><use href="#reload"/></svg></span></div>
      <label class="search"><svg><use href="#lens"/></svg><input type="text" aria-label="Search folder" placeholder="Search 90303EDB9..."></label>
    </div>
    <div class="wbody">
      <ul class="side">
        <li class="top"><svg class="s16"><use href="#star"/></svg>Quick access</li>
        <li class="top gap"><svg class="s16"><use href="#pc"/></svg>This PC</li>
        <li><svg class="s16"><use href="#cube"/></svg>3D Objects</li><li><svg class="s16"><use href="#desktop"/></svg>Desktop</li><li><svg class="s16"><use href="#docs"/></svg>Documents</li><li><svg class="s16"><use href="#down"/></svg>Downloads</li><li><svg class="s16"><use href="#music"/></svg>Music</li><li><svg class="s16"><use href="#pics"/></svg>Pictures</li><li><svg class="s16"><use href="#video"/></svg>Videos</li><li class="sel"><svg class="s16"><use href="#disk"/></svg>Local Disk (C:)</li>
        <li class="top gap"><svg class="s16"><use href="#net"/></svg>Network</li>
      </ul>
      <div class="files"><table>
        <colgroup><col class="cn"><col class="cdt"><col class="ct"><col class="cs"></colgroup>
        <thead><tr><th><svg class="sort" viewBox="0 0 10 6"><path d="m1 5 4-4 4 4" fill="none" stroke="#666"/></svg>Name</th><th>Date modified</th><th>Type</th><th>Size</th></tr></thead>
        <tbody>
        <tr><td><svg class="s16"><use href="#folder"/></svg>bases</td><td>8/14/2025 8:15 AM</td><td>File folder</td><td></td></tr>
        <tr><td><svg class="s16"><use href="#folder"/></svg>config</td><td>8/24/2025 4:04 AM</td><td>File folder</td><td></td></tr>
        <tr><td><svg class="s16"><use href="#folder"/></svg>liveupdate</td><td>8/24/2025 4:00 AM</td><td>File folder</td><td></td></tr>
        <tr><td><svg class="s16"><use href="#folder"/></svg>logs</td><td>8/24/2025 2:57 AM</td><td>File folder</td><td></td></tr>
        <tr><td><svg class="s16"><use href="#folder"/></svg>MQL5</td><td>8/14/2025 9:57 AM</td><td>File folder</td><td></td></tr>
        <tr><td><svg class="s16"><use href="#folder"/></svg>profiles</td><td>8/14/2025 3:58 AM</td><td>File folder</td><td></td></tr>
        <tr><td><svg class="s16"><use href="#folder"/></svg>Tester</td><td>8/22/2025 9:47 AM</td><td>File folder</td><td></td></tr>
        <tr><td><svg class="s16"><use href="#textdoc"/></svg>origin</td><td>8/14/2025 3:58 AM</td><td>Text Document</td><td>1 KB</td></tr>
        </tbody></table></div>
    </div>
    <footer class="wstatus"><span>8 items</span></footer>
  </section>

  <!-- extracted archive folder -->
  <section class="win win2">
    <header class="wtitle"><svg class="s16"><use href="#folder"/></svg><i class="bar"></i><svg class="s16"><use href="#doccheck"/></svg><svg class="s16"><use href="#folder"/></svg><svg class="q"><use href="#qmenu"/></svg><i class="bar"></i><span>ScalperologyAi.8.50</span>
      <div class="wbtns"><button aria-label="Minimize"><svg><use href="#min"/></svg></button><button aria-label="Maximize"><svg><use href="#max"/></svg></button><button aria-label="Close"><svg><use href="#x"/></svg></button></div></header>
    <div class="ribbon"><button class="file">File</button><button>Home</button><button>Share</button><button>View</button><span class="help"><svg class="cd"><use href="#chevdown"/></svg><b>?</b></span></div>
    <div class="addr">
      <div class="navs"><svg class="ar"><use href="#back"/></svg><svg class="ar dis flip"><use href="#back"/></svg><svg class="cd"><use href="#chevdown"/></svg><svg class="ar up"><use href="#back"/></svg></div>
      <div class="path"><svg class="s16"><use href="#folder"/></svg><svg><use href="#crumb"/></svg><a href="#">This PC</a><svg><use href="#crumb"/></svg><a href="#">Documents</a><svg><use href="#crumb"/></svg><a href="#">EASY Bots</a><svg><use href="#crumb"/></svg><a href="#">ScalperologyAi</a><svg><use href="#crumb"/></svg><a href="#">ScalperologyAi</a><svg><use href="#crumb"/></svg><a href="#">ScalperologyAi.8.50</a><span class="pend"><svg class="cd"><use href="#chevdown"/></svg><svg class="rl"><use href="#reload"/></svg></span></div>
      <label class="search"><svg><use href="#lens"/></svg><input type="text" aria-label="Search folder" placeholder="Search Scalperolo..."></label>
    </div>
    <div class="wbody">
      <ul class="side">
        <li class="top"><svg class="s16"><use href="#star"/></svg>Quick access</li>
        <li class="top gap"><svg class="s16"><use href="#pc"/></svg>This PC</li>
        <li><svg class="s16"><use href="#cube"/></svg>3D Objects</li><li><svg class="s16"><use href="#desktop"/></svg>Desktop</li><li class="sel"><svg class="s16"><use href="#docs"/></svg>Documents</li><li><svg class="s16"><use href="#down"/></svg>Downloads</li><li><svg class="s16"><use href="#music"/></svg>Music</li><li><svg class="s16"><use href="#pics"/></svg>Pictures</li><li><svg class="s16"><use href="#video"/></svg>Videos</li><li><svg class="s16"><use href="#disk"/></svg>Local Disk (C:)</li>
        <li class="top gap"><svg class="s16"><use href="#net"/></svg>Network</li>
      </ul>
      <div class="files"><table>
        <colgroup><col class="cn"><col class="cdt"><col class="ct"><col class="cs"></colgroup>
        <thead><tr><th>Name</th><th>Date modified</th><th>Type</th><th>Size</th></tr></thead>
        <tbody>
        <tr><td><svg class="s16"><use href="#folder"/></svg>Common</td><td>8/24/2025 3:15 AM</td><td>File folder</td><td></td></tr>
        <tr class="sel"><td><svg class="s16"><use href="#folder"/></svg>MQL5</td><td>8/24/2025 3:15 AM</td><td>File folder</td><td></td></tr>
        <tr><td><svg class="s16"><use href="#folder"/></svg>Trader Guides</td><td></td><td>File folder</td><td></td></tr>
        <tr><td><svg class="s16"><use href="#textdoc"/></svg>1 - Read Before</td><td></td><td>Text Document</td><td></td></tr>
        <tr><td><svg class="s16"><use href="#link"/></svg>2 - Install For Live</td><td></td><td>Internet Shortcut</td><td></td></tr>
        <tr><td><svg class="s16"><use href="#link"/></svg>3 - Install In Strat</td><td></td><td>Internet Shortcut</td><td></td></tr>
        <tr><td><svg class="s16"><use href="#link"/></svg>4 - How Start Trad</td><td></td><td>Internet Shortcut</td><td></td></tr>
        </tbody></table></div>
    </div>
    <footer class="wstatus"><span>7 items</span><span>1 item selected</span>
      <div class="views"><button class="cur" aria-label="Details"><svg viewBox="0 0 18 16"><path d="M1.500 1.500h4v13h-4zM1.500 5.500h4M1.500 10h4" fill="#fff" stroke="#888"/><path d="M7 3h10M7 8h10M7 13h10" stroke="#555" stroke-dasharray="4 1"/></svg></button><button aria-label="Icons"><svg><use href="#pics"/></svg></button></div></footer>
  </section>

  <!-- menus -->
  <ul class="menu tm filemenu">
    <li class="dim">New Chart<svg class="tri"><use href="#tri"/></svg></li>
    <li>Open Deleted<svg class="tri"><use href="#tri"/></svg></li>
    <li>Profiles<svg class="tri"><use href="#tri"/></svg></li>
    <li>Close<kbd>Ctrl+F4</kbd></li>
    <li><svg class="mi"><use href="#save"/></svg>Save<kbd>Ctrl+S</kbd></li>
    <li><svg class="mi"><use href="#savepic"/></svg>Save as Picture</li>
    <li class="hr"></li>
    <li class="hot"><svg class="mi"><use href="#openfolder"/></svg>Open Data Folder<kbd>Ctrl+Shift+D</kbd></li>
    <li class="hr"></li>
    <li><svg class="mi"><use href="#print"/></svg>Print<kbd>Ctrl+P</kbd></li>
    <li><svg class="mi"><use href="#preview"/></svg>Print Preview</li>
    <li><svg class="mi"><use href="#setup"/></svg>Print Setup</li>
    <li class="hr"></li>
    <li><svg class="mi"><use href="#plus"/></svg>Open an Account</li>
    <li class="dim"><svg class="mi"><use href="#deposit"/></svg>Deposit</li>
    <li class="dim"><svg class="mi"><use href="#withdraw"/></svg>Withdrawal</li>
    <li><svg class="mi"><use href="#user"/></svg>Login to Trade Account</li>
    <li><svg class="mi"><use href="#globe"/></svg>Login to Web Trader</li>
    <li><svg class="mi"><use href="#cap"/></svg>Login to MQL5.community</li>
    <li class="hr"></li>
    <li><svg class="mi"><use href="#exit"/></svg>Exit</li>
  </ul>

  <ul class="menu tm navmenu">
    <li><svg class="mi"><use href="#bag"/></svg>Buy from the Market</li>
    <li><svg class="mi"><use href="#case"/></svg>Order your own Program</li>
    <li><span class="mi ide">IDE</span>Create in MetaEditor<kbd>Insert</kbd></li>
    <li><svg class="mi"><use href="#hotkey"/></svg>Set Hotkey</li>
    <li class="hr"></li>
    <li><svg class="mi"><use href="#refresh"/></svg>Refresh</li>
  </ul>
  <div class="marker"></div>

  <ul class="menu wm pastemenu">
    <li>View<svg class="chev"><use href="#chev"/></svg></li>
    <li>Sort by<svg class="chev"><use href="#chev"/></svg></li>
    <li>Group by<svg class="chev"><use href="#chev"/></svg></li>
    <li>Refresh</li>
    <li class="hr"></li>
    <li>Customize this folder...</li>
    <li class="hr"></li>
    <li class="hot">Paste</li>
    <li>Paste shortcut</li>
    <li>Undo Rename<kbd>Ctrl+Z</kbd></li>
    <li class="hr"></li>
    <li>Give access to<svg class="chev"><use href="#chev"/></svg></li>
    <li class="hr"></li>
    <li>New<svg class="chev"><use href="#chev"/></svg></li>
    <li class="hr"></li>
    <li>Properties</li>
  </ul>

  <ul class="menu wm copymenu">
    <li><b>Open</b></li>
    <li>Open in new window</li>
    <li>Pin to Quick access</li>
    <li><svg class="mi"><use href="#sharex"/></svg>Upload with ShareX</li>
    <li class="hr"></li>
    <li>Give access to<svg class="chev"><use href="#chev"/></svg></li>
    <li>Restore previous versions</li>
    <li>Include in library<svg class="chev"><use href="#chev"/></svg></li>
    <li>Pin to Start</li>
    <li><svg class="mi"><use href="#rar"/></svg>Add to archive...</li>
    <li><svg class="mi"><use href="#rar"/></svg>Add to "MQL5.rar"</li>
    <li><svg class="mi"><use href="#rar"/></svg>Compress and email...</li>
    <li><svg class="mi"><use href="#rar"/></svg>Compress to "MQL5.rar" and email</li>
    <li class="hr"></li>
    <li>Send to<svg class="chev"><use href="#chev"/></svg></li>
    <li class="hr"></li>
    <li>Cut</li>
    <li class="hot">Copy</li>
    <li class="hr"></li>
    <li>Create shortcut</li>
    <li>Delete</li>
    <li>Rename</li>
    <li class="hr"></li>
    <li>Properties</li>
  </ul>

  <!-- annotations -->
  <div class="redbox rb1"></div>
  <div class="redbox rb2"></div>
  <svg class="ink" aria-hidden="true">
    <g class="arrow"><circle cx="268" cy="174" r="6"/><path d="M268 174 450 163" fill="none" stroke="#ea0a0a" stroke-width="6"/><path d="m468 161-22-9 1 20z"/></g>
    <g class="bubble">
      <path d="M1208 151 1406 179H1971Q1991 180 1991 199L1986 314Q1984 334 1966 335H1381Q1362 334 1361 314L1357 196Z"/>
      <path d="M1482 578 1579 612Q1585 610 1594 610H2001Q2038 612 2040 652L2027 896Q2022 934 1988 935H1608Q1570 932 1568 896L1555 647Z"/>
      <path d="M1385 989 1515 1033H1737Q1753 1034 1754 1050L1749 1156Q1747 1172 1733 1173H1505Q1491 1172 1490 1156L1484 1054Z"/>
      <path d="M79 737 198 786H424Q442 788 443 806L437 928Q434 945 420 946H166Q151 945 149 928L143 806Q143 798 147 794Z"/>
    </g>
  </svg>
  <div class="say s1">This is the root folder of your trading terminal.<br>You need to copy the MQL5 folder from the .zip<br>archive you downloaded into this folder.</div>
  <div class="say s2"><p>The folder you received after<br>extracting the .zip archive with EASY<br>Bots</p><p>The MQL5 folder contains the bot<br>file .ex5 and .txt file for accessing the<br>AI model in Live Trading mode.</p></div>
  <div class="say s3">This folder must be<br>Copy to the root<br>directory of the MT5</div>
  <div class="say s4">Click Refresh. Or Close.<br>Open the trading terminal.</div>
  <div class="badge b1">1</div><div class="badge b2">2</div><div class="badge b3">3</div><div class="badge b4">4</div>
  <svg class="ptr p1"><use href="#pointer"/></svg><svg class="ptr p2"><use href="#pointer"/></svg><svg class="ptr p3"><use href="#pointer"/></svg><svg class="ptr p4"><use href="#pointer"/></svg>
</div>
</body>
</html>
```
FILE: styles.css
```css
* { box-sizing: border-box; }
body { margin: 0; font: 12px/16px "Open Sans", "Noto Sans", sans-serif; color: #000; background: #fff; }
button { font: inherit; color: inherit; border: 0; padding: 0; background: none; }
ul { list-style: none; margin: 0; padding: 0; }
a { color: inherit; text-decoration: none; }
svg { display: block; flex: none; }
.sprite { position: absolute; width: 0; height: 0; }
.s16 { width: 16px; height: 16px; }
.hash { font-size: 11px; }

.app { position: relative; overflow: hidden; min-height: 100vh; display: grid; grid-template-rows: 20px 30px 768fr 376fr 23px; grid-template-columns: minmax(0, 1fr); background: #f7f3f7; }

/* menu bar */
.menubar { display: flex; align-items: stretch; border-bottom: 1px solid #a0a0a0; }
.appicon { width: 12px; height: 16px; margin: 0 2px 0 6px; }
.mb { padding: 0 10px 1px 11px; }
.mb.active { width: 40px; background: #0078d7; color: #fff; }
.wctl { margin-left: auto; padding: 4px 2px; }
.wctl svg { width: 46px; height: 10px; }

/* toolbar */
.toolbar { display: flex; align-items: center; padding-left: 1px; }
.grip { flex: none; width: 0; height: 26px; border-left: 2px dotted #c4c0c4; margin: 0 2px; }
.sep { flex: none; width: 1px; height: 25px; background: #9a9a9a; margin: 0 3px 0 2px; }
.tb { flex: none; display: flex; align-items: center; justify-content: center; width: 32px; height: 26px; }
.tb svg { width: 20px; height: 20px; }
.tb.on, .tf.on, .wide.on { background: #d5e6f6; border: 1px solid #b9bfc8; border-width: 1px 0 0 1px; }
.tools { display: flex; }
.first { width: 281px; padding-left: 4px; }
.push { margin-left: auto; }
.wide { flex: none; display: flex; align-items: center; height: 26px; white-space: nowrap; }
.wide.on { width: 100px; gap: 8px; padding-left: 7px; }
.wide.off { width: 94px; gap: 8px; padding-left: 9px; color: #999; }
.i-play { width: 12px; height: 14px; }
.i-order { width: 14px; height: 18px; }
.shapes { width: 44px; gap: 2px; }
.tb .dd { width: 8px; height: 5px; }
.tf { flex: none; width: 32px; height: 26px; color: #0f5c9e; }
.tright { margin-left: auto; display: flex; align-items: center; padding-right: 3px; }
.tb .s18 { width: 17px; height: 17px; }
.note { position: relative; margin-right: 6px; }
.note b { position: absolute; left: 14px; top: 0; width: 14px; height: 15px; border-radius: 50%; background: #e8351c; color: #fff; font-weight: 400; line-height: 15px; }
.lvl { width: 22px; display: flex; flex-direction: column; align-items: center; color: #12a32a; font-size: 8px; line-height: 8px; }
.lvl svg { width: 12px; height: 10px; }
.battery { width: 42px; height: 15px; border: 1px solid #888; background: #fff; box-shadow: inset 2px 0 #2fc83c; margin-left: 8px; }

/* docked panes */
.workspace { display: grid; grid-template-columns: 352px minmax(0, 1fr); column-gap: 4px; border-bottom: 1px solid #a0a0a0; }
.left { display: grid; grid-template-rows: 1fr 1fr; }
.pane { display: flex; flex-direction: column; background: #fff; }
.phead { display: flex; align-items: center; justify-content: space-between; height: 18px; margin-top: 1px; padding: 0 5px 0 3px; background: #bbcddf; border-top: 1px solid #a0a0a0; }
.x { width: 10px; height: 10px; }
.mwhead { display: flex; align-items: center; height: 26px; padding: 0 4px 0 4px; }
.ask { margin-left: auto; padding-right: 5px; border-right: 1px solid #a0a0a0; line-height: 24px; }
.daily { width: 67px; padding-left: 7px; white-space: nowrap; }
.mwrow { display: flex; align-items: center; justify-content: space-between; height: 18px; padding: 0 4px 0 0; color: #666; }
.ptabs { display: flex; margin-top: auto; height: 28px; background: #f7f3f7; box-shadow: inset 0 1px #000; padding-left: 4px; align-items: flex-start; }
.ptab { height: 20px; padding: 0 9px; color: #777; }
.ptab.cur { background: #fff; color: #000; border: 1px solid #000; border-width: 0 2px 2px 1px; padding: 0 8px; }
.tree { padding-top: 2px; }
.tree li { display: flex; align-items: center; height: 20px; gap: 5px; }
.tree .root { height: 20px; padding-left: 3px; gap: 6px; }
.tree i { position: relative; flex: none; width: 14px; height: 20px; margin: 0 -5px 0 11px; border-left: 1px dotted #888; }
.tree i::before { content: ""; position: absolute; left: -6px; top: 6px; width: 6px; height: 6px; border: solid #999; border-width: 2px 2px 0 0; transform: rotate(45deg); box-shadow: 2px -2px #fff; }
.tree i::after { content: ""; position: absolute; left: 7px; top: 10px; width: 5px; border-top: 1px dotted #888; }
.tree .leaf::before { display: none; }
.tree .leaf::after { left: 0; width: 12px; }

/* chart */
.chartcol { display: grid; grid-template-rows: minmax(0, 1fr) 24px; }
.chart { display: grid; grid-template-columns: minmax(0, 1fr) 48px; grid-template-rows: minmax(0, 1fr) 21px; background: #000; color: #fff; font: 11px/14px "DejaVu Sans Condensed", "DejaVu Sans", sans-serif; padding: 2px 0 0 2px; }
.plot { position: relative; border: 1px solid #fff; overflow: hidden; }
.grid { width: 100%; height: 100%; }
.ctitle { position: absolute; left: 4px; top: 3px; display: flex; align-items: center; font-size: 10px; white-space: nowrap; }
.ctitle svg { width: 15px; height: 11px; margin-right: 6px; }
.sym { width: 71px; } .pair { width: 49px; }
.ohlc { font-size: 9px; margin-right: 5px; }
.volume { position: absolute; left: 14px; bottom: 0; display: flex; align-items: flex-end; gap: 14px; }
.volume i { width: 2px; background: #32cd32; }
.prices { position: relative; display: flex; flex-direction: column; justify-content: space-between; height: 527px; margin-top: 28px; font-size: 10px; line-height: 14px; }
.prices span { padding-left: 4px; }
.prices span::before { content: ""; float: left; width: 4px; height: 1px; background: #fff; margin: 7px 0 0 -4px; }
.prices b { position: absolute; left: 2px; top: 190px; width: 39px; padding-left: 2px; line-height: 11px; background: #708090; color: #000; font-weight: 400; }
.times { grid-column: 1 / -1; display: flex; overflow: hidden; font: 10px/18px "Liberation Sans", sans-serif; white-space: nowrap; }
.times span { flex: none; width: 64px; position: relative; }
.times span::before { content: ""; position: absolute; left: 0; top: 0; width: 1px; height: 4px; background: #fff; }
.ctabs { display: flex; align-items: center; padding-left: 88px; color: #777; white-space: nowrap; overflow: hidden; }
.ctabs button { height: 14px; line-height: 14px; padding: 0 8px 0 11px; border-left: 1px solid #777; }

/* toolbox */
.toolbox { display: grid; grid-template-columns: 15px minmax(0, 1fr); column-gap: 2px; }
.strip { background: #9cb6d6; display: flex; flex-direction: column; justify-content: space-between; align-items: center; padding: 6px 0 6px; }
.strip span { writing-mode: vertical-rl; transform: rotate(180deg); line-height: 15px; }
.tbody { display: flex; flex-direction: column; }
.journal { flex: 1; background: #fff; padding: 4px 6px; }
.ttabs { display: flex; align-items: flex-start; height: 24px; box-shadow: inset 0 1px #000; padding-left: 5px; color: #777; }
.ttabs > button { position: relative; height: 20px; padding: 0 8px 0 9px; }
.ttabs > button:not(.cur)::after { content: ""; position: absolute; right: 0; top: 4px; width: 1px; height: 14px; background: #777; }
.ttabs .cur { background: #fff; color: #000; border: 1px solid #000; border-width: 0 2px 2px 1px; padding: 0 8px; }
.services { margin-left: auto; display: flex; gap: 9px; padding: 5px 5px 0 0; color: #000; }
.services a { display: flex; align-items: center; gap: 3px; }
.dim { color: #888; --cf: #e4e4e4; --cs: #aaa; }

/* status bar */
.status { display: flex; align-items: center; border-top: 2px solid #a8a4a8; border-bottom: 1px solid #000; }
.status span { height: 18px; line-height: 18px; border-left: 1px solid #999; padding-left: 5px; }
.status .msg { flex: 1; border: 0; padding-left: 1px; }
.c1 { width: 128px; } .c2 { width: 98px; } .c3 { width: 69px; }
.net { display: flex; align-items: center; gap: 8px; width: 117px; }
.status .net { padding-left: 8px; }
.net svg { width: 10px; height: 10px; }

/* explorer windows */
.win { position: absolute; width: 1125px; height: 633px; background: #fff; display: flex; flex-direction: column; padding-left: 1px; }
.win1 { left: 374px; top: 73px; }
.win2 { left: 817px; top: 482px; border-left: 1px solid #000; }
.wtitle { display: flex; align-items: center; height: 31px; padding-left: 8px; }
.wtitle .bar { width: 1px; height: 13px; background: #888; margin: 0 8px 0 7px; }
.wtitle .s16 + .s16 { margin-left: 6px; }
.wtitle .q { width: 8px; height: 8px; margin-left: 7px; }
.wtitle .q + .bar { margin: 0 6px 0 8px; }
.wbtns { margin-left: auto; display: flex; }
.wbtns button { width: 46px; height: 24px; display: flex; align-items: center; justify-content: center; }
.wbtns svg { width: 12px; height: 12px; }
.ribbon { display: flex; height: 24px; border-bottom: 1px solid #d9d9d9; color: #444; }
.ribbon button { width: 57px; }
.ribbon .file { width: 56px; background: #0063b1; color: #fff; }
.help { margin-left: auto; display: flex; align-items: center; gap: 10px; padding-right: 4px; }
.help .cd { color: #999; }
.help b { width: 15px; height: 16px; border-radius: 50%; background: #0a68c4; color: #fff; text-align: center; }
.cd { width: 10px; height: 8px; color: #555; }
.addr { display: flex; align-items: center; height: 41px; padding-right: 12px; }
.navs { display: flex; align-items: center; gap: 15px; width: 106px; padding-left: 13px; color: #777; }
.ar { width: 14px; height: 12px; }
.navs .cd { width: 8px; margin: 0 -4px 0 -2px; }
.navs .dis { color: #ccc; }
.flip { transform: rotate(180deg); }
.up { transform: rotate(90deg); color: #666; }
.path { flex: 1; display: flex; align-items: center; height: 30px; border: 1px solid #d9d9d9; padding-left: 3px; white-space: nowrap; }
.path > svg:not(.s16) { width: 6px; height: 8px; margin: 0 8px 0 7px; }
.lead { width: 10px; margin: 0 6px 0 4px; color: #666; font-size: 14px; line-height: 14px; }
.pend { margin-left: auto; display: flex; align-items: center; height: 28px; gap: 9px; }
.rl { width: 34px; height: 28px; padding: 8px 11px; border-left: 1px solid #d9d9d9; }
.search { display: flex; align-items: center; width: 160px; height: 30px; margin-left: 12px; border: 1px solid #d9d9d9; padding-left: 14px; color: #777; width: 148px; }
.search svg { width: 14px; height: 14px; }
.search input { flex: 1; min-width: 0; margin-left: 8px; border: 0; padding: 0; font: inherit; color: #666; background: none; }
.search input::placeholder { color: #666; opacity: 1; }
.wbody { flex: 1; display: flex; }
.side { width: 159px; padding-top: 17px; border-right: 1px solid #f2f2f2; }
.side li { display: flex; align-items: center; gap: 4px; height: 24px; width: 156px; padding-left: 32px; }
.side .top { padding-left: 24px; }
.side .gap { margin-top: 8px; }
.side .sel { background: #dddade; }
.files { flex: 1; padding-left: 16px; }
table { border-collapse: collapse; table-layout: fixed; width: 601px; }
.cn { width: 257px; } .cdt { width: 144px; } .ct { width: 120px; } .cs { width: 80px; }
th, td { padding: 0 0 0 6px; text-align: left; font-weight: 400; white-space: nowrap; }
th { position: relative; height: 27px; color: #4c607a; border-right: 1px solid #e5e5e5; }
th:first-child { padding-left: 2px; }
.sort { position: absolute; left: 121px; top: 0; width: 10px; height: 6px; }
tbody::before { content: ""; display: block; height: 5px; }
td { height: 21px; color: #6d6d6d; line-height: 19px; }
td:first-child { color: #000; padding-left: 2px; }
td:last-child { text-align: right; padding-right: 7px; }
td svg { float: left; margin: 1px 4px 0 2px; }
tr.sel td { background: #cce8ff; box-shadow: inset 0 1px #99d1ff, inset 0 -1px #99d1ff; }
.wstatus { display: flex; align-items: center; height: 22px; padding-left: 14px; color: #1e395b; gap: 19px; }
.views { margin-left: auto; display: flex; align-items: center; gap: 3px; padding-right: 6px; }
.views button { width: 16px; height: 16px; }
.views button svg { width: 16px; height: 16px; }
.views .cur { width: 22px; height: 23px; background: #cbe8f6; border: 1px solid #26a0da; padding-left: 2px; }

/* menus */
.menu { position: absolute; }
.menu li { display: flex; align-items: center; position: relative; white-space: nowrap; }
.menu kbd { margin-left: auto; font: inherit; }
.menu .mi { position: absolute; }
.tm { background: #f7f3f7; }
.tm li { height: 23px; padding: 0 3px 0 27px; margin: 0 3px; }
.tm .mi { left: 5px; width: 15px; height: 15px; }
.tm .hr { height: 9px; }
.hr::before { content: ""; flex: 1; height: 1px; background: #a0a0a0; }
.tm li.hr { padding: 0; }
.tri { width: 6px; height: 10px; margin-left: auto; }
.filemenu .tri { margin-right: 2px; }
.filemenu { left: 20px; top: 18px; width: 237px; padding: 2px 0; border: 1px solid #a0a0a0; }
.filemenu .hot { background: #0078d7; color: #fff; }
.navmenu { left: 107px; top: 532px; width: 246px; padding: 0 0 3px; border-bottom: 1px solid #a0a0a0; }
.navmenu .ide { font-size: 9px; line-height: 15px; color: #0f5c9e; }
.marker { position: absolute; left: 98px; top: 637px; width: 238px; height: 22px; background: #f3d41c; mix-blend-mode: multiply; }
.wm { background: #eee; }
.wm li { height: 22px; padding: 0 7px 0 31px; margin: 0 3px; }
.wm .mi { left: 7px; width: 16px; height: 16px; }
.wm .hot { background: #fff; }
.wm .hr { height: 7px; padding: 0 7px; }
.chev { width: 10px; height: 14px; margin-left: auto; }
.wm kbd { margin-right: 9px; }
.pastemenu { left: 567px; top: 382px; width: 234px; padding: 2px 0 3px; border: 1px solid #a0a0a0; border-width: 0 1px; }
.copymenu { left: 1101px; top: 640px; width: 297px; padding: 4px 0; border: 1px solid #a0a0a0; }

/* annotations */
.redbox { position: absolute; border: 5px solid #ea0a0a; }
.rb1 { left: 469px; top: 126px; width: 741px; height: 43px; }
.rb2 { left: 886px; top: 525px; width: 665px; height: 58px; }
.ink { position: absolute; left: 0; top: 0; width: 100%; height: 100%; }
.arrow { fill: #ea0a0a; filter: drop-shadow(1px 3px 2px rgba(0,0,0,.4)); }
.bubble { fill: #f8c82c; stroke: #fff; stroke-width: 4px; paint-order: stroke; }
.say { position: absolute; font: 500 23px/35px "Noto Sans", "Open Sans", sans-serif; white-space: nowrap; }
.say p { margin: 0 0 12px; }
.s1 { left: 1397px; top: 194px; }
.s2 { left: 1588px; top: 633px; }
.s3 { left: 1484px; top: 1047px; width: 270px; text-align: center; }
.s4 { left: 165px; top: 818px; font: 24px/29px "Liberation Serif", serif; }
.badge { position: absolute; width: 40px; height: 41px; background: #f5bd22; color: #fff; font: 700 26px/41px "Liberation Sans", sans-serif; text-align: center; box-shadow: 1px 3px 4px rgba(0,0,0,.5); border-radius: 2px; }
.b1 { left: 193px; top: 164px; }
.b2 { left: 1275px; top: 967px; }
.b3 { left: 687px; top: 503px; }
.b4 { left: 34px; top: 690px; }
.ptr { position: absolute; width: 13px; height: 20px; }
.p1 { left: 83px; top: 522px; }
.p2 { left: 1186px; top: 989px; }
.p3 { left: 740px; top: 517px; }
.p4 { left: 154px; top: 173px; width: 7px; height: 11px; }
```
